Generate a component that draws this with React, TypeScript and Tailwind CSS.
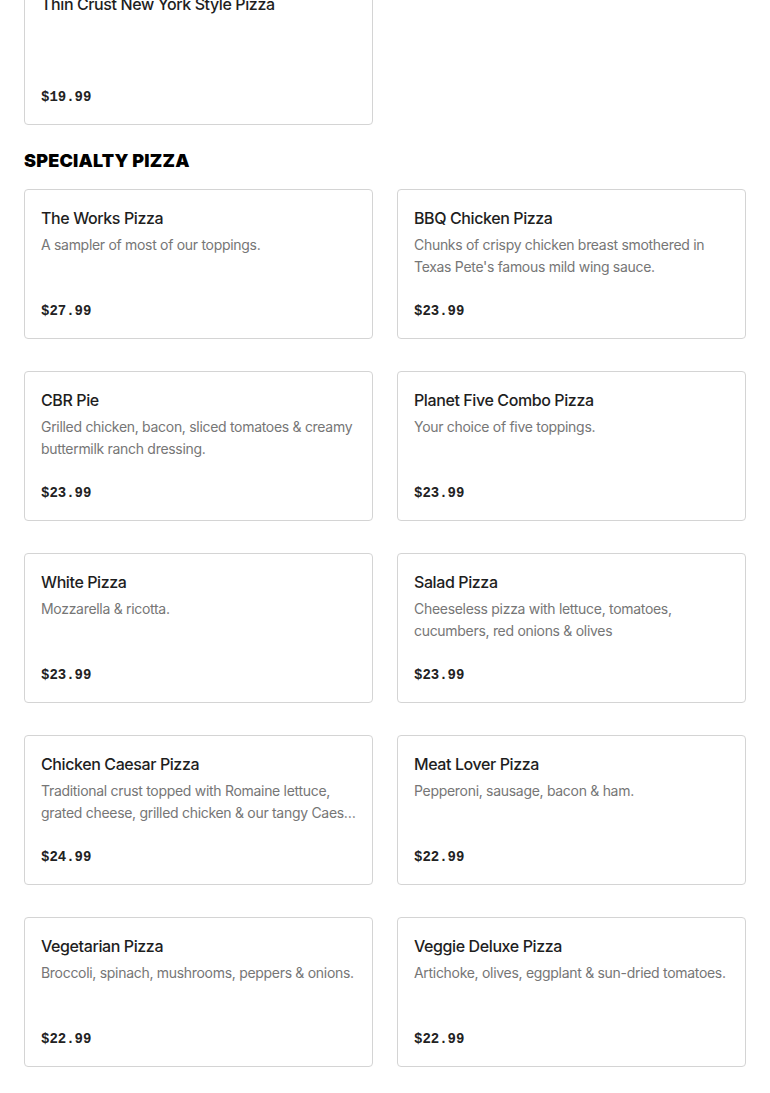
type Item = { name: string; description?: string; lines?: [string, string]; price: string };

const specialty: Item[] = [
  { name: "The Works Pizza", description: "A sampler of most of our toppings.", price: "$27.99" },
  {
    name: "BBQ Chicken Pizza",
    description: "Chunks of crispy chicken breast smothered in Texas Pete's famous mild wing sauce.",
    price: "$23.99",
  },
  {
    name: "CBR Pie",
    description: "Grilled chicken, bacon, sliced tomatoes & creamy buttermilk ranch dressing.",
    price: "$23.99",
  },
  { name: "Planet Five Combo Pizza", description: "Your choice of five toppings.", price: "$23.99" },
  { name: "White Pizza", description: "Mozzarella & ricotta.", price: "$23.99" },
  {
    name: "Salad Pizza",
    description: "Cheeseless pizza with lettuce, tomatoes, cucumbers, red onions & olives",
    price: "$23.99",
  },
  {
    name: "Chicken Caesar Pizza",
    // second line gets cut mid-word with an ellipsis
    lines: [
      "Traditional crust topped with Romaine lettuce,",
      "grated cheese, grilled chicken & our tangy Caesar dressing.",
    ],
    price: "$24.99",
  },
  { name: "Meat Lover Pizza", description: "Pepperoni, sausage, bacon & ham.", price: "$22.99" },
  { name: "Vegetarian Pizza", description: "Broccoli, spinach, mushrooms, peppers & onions.", price: "$22.99" },
  { name: "Veggie Deluxe Pizza", description: "Artichoke, olives, eggplant & sun-dried tomatoes.", price: "$22.99" },
];

const descClass = "text-[14px] leading-[22px] tracking-[-0.3px] text-[#767676]";

function MenuCard({ item }: { item: Item }) {
  return (
    <div className="flex h-[150px] flex-col rounded-[4px] border border-[#d4d4d4] bg-white p-4">
      <h3 className="text-[16px] leading-6 font-medium text-[#1e1e1e] tracking-[-0.4px]">{item.name}</h3>
      {item.description && <p className={`mt-1 line-clamp-2 ${descClass}`}>{item.description}</p>}
      {item.lines && (
        <div className={`mt-1 ${descClass}`}>
          <p>{item.lines[0]}</p>
          <p className="overflow-hidden text-ellipsis whitespace-nowrap">{item.lines[1]}</p>
        </div>
      )}
      <div className="mt-auto translate-y-[1px] font-['Liberation_Mono',monospace] text-[14px] leading-6 font-bold text-[#222]">
        {item.price}
      </div>
    </div>
  );
}

export default function App() {
  return (
    <div className="min-h-screen bg-white font-['Inter',sans-serif] px-6 pb-[26px]">
      <div className="mt-[-25px] grid grid-cols-2 gap-x-6">
        <MenuCard item={{ name: "Thin Crust New York Style Pizza", price: "$19.99" }} />
      </div>
      <h2 className="mt-6 mb-4 text-[18px] leading-6 font-black uppercase tracking-[0.2px] text-black">
        Specialty Pizza
      </h2>
      <div className="grid grid-cols-2 gap-x-6 gap-y-8">
        {specialty.map((item) => (
          <MenuCard key={item.name} item={item} />
        ))}
      </div>
    </div>
  );
}
